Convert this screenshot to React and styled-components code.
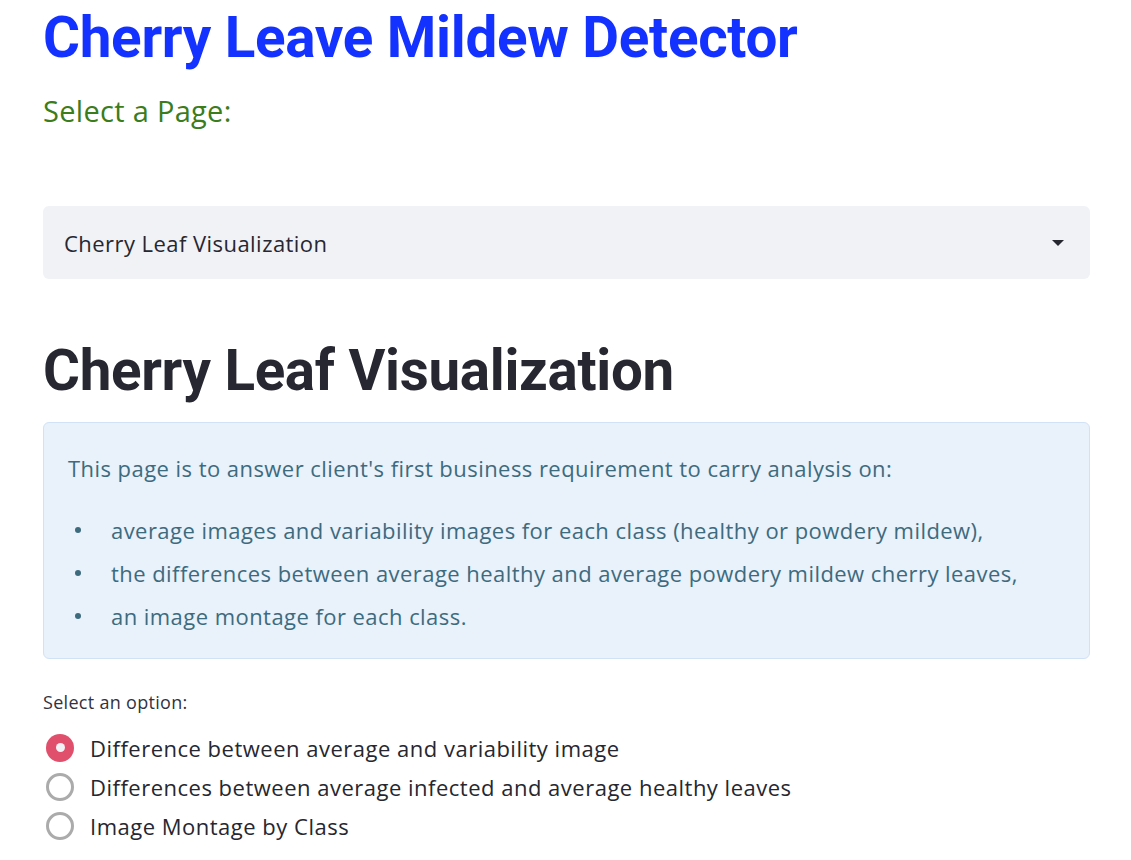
import React from "react";
import styled, { createGlobalStyle } from "styled-components";

const GlobalStyle = createGlobalStyle`
  body {
    margin: 0;
    background: #ffffff;
    font-family: "Open Sans", "Noto Sans", sans-serif;
    color: #262730;
  }
`;

const Page = styled.main`
  display: flex;
  flex-direction: column;
  padding: 0 41px 0 43px;
`;

const Title = styled.h1`
  margin: 6px 0 0;
  font-family: Roboto, sans-serif;
  font-size: 56.6px;
  line-height: 64px;
  font-weight: 700;
  color: #1432ff;
  letter-spacing: -0.3px;
`;

const PageLabel = styled.h3`
  margin: 21px 0 0;
  font-size: 29px;
  line-height: 40px;
  font-weight: 400;
  letter-spacing: 0.3px;
  color: #3b7c1b;
`;

const Select = styled.div`
  display: flex;
  align-items: center;
  justify-content: space-between;
  margin-top: 75px;
  height: 73px;
  padding: 0 26px 0 21px;
  background: #f0f2f6;
  border-radius: 6px;
  font-size: 22px;
  letter-spacing: 0.45px;
  color: #262730;
`;

const Caret = styled.span`
  width: 0;
  height: 0;
  border-left: 6px solid transparent;
  border-right: 6px solid transparent;
  border-top: 6px solid #262730;
`;

const Heading = styled.h1`
  margin: 60px 0 0;
  font-family: Roboto, sans-serif;
  font-size: 56.5px;
  line-height: 64px;
  font-weight: 700;
  color: #262730;
  letter-spacing: -0.3px;
`;

const InfoBox = styled.div`
  margin-top: 19px;
  padding: 28px 24px 25px;
  background: #e9f1fb;
  border: 1px solid #d2e2f6;
  border-radius: 6px;
  color: #3d6b7e;
  font-size: 22px;
  letter-spacing: 0.45px;
  line-height: 34px;
`;

const Para = styled.p`
  margin: 0 0 28px;
`;

const List = styled.ul`
  margin: 0;
  padding: 0;
  list-style: none;
`;

const Item = styled.li`
  position: relative;
  padding-left: 43px;
  margin-bottom: 9px;

  &:last-child {
    margin-bottom: 0;
  }

  &::before {
    content: "";
    position: absolute;
    left: 7px;
    top: 14px;
    width: 6px;
    height: 6px;
    border-radius: 50%;
    background: #3d6b7e;
  }
`;

const OptionLabel = styled.div`
  margin-top: 30px;
  font-size: 18px;
  letter-spacing: 0.3px;
  line-height: 26px;
  color: #31333f;
`;

const RadioGroup = styled.div`
  display: flex;
  flex-direction: column;
  margin-top: 13px;
`;

const RadioRow = styled.label`
  display: flex;
  align-items: center;
  gap: 16px;
  height: 39px;
  padding-left: 3px;
  font-size: 22px;
  letter-spacing: 0.5px;
  color: #262730;
`;

const Ring = styled.span`
  box-sizing: border-box;
  width: 28px;
  height: 28px;
  border-radius: 50%;
  flex-shrink: 0;
  display: flex;
  align-items: center;
  justify-content: center;
  border: ${p => (p.checked ? "none" : "3px solid #ababab")};
  background: ${p => (p.checked ? "#e0506c" : "#ffffff")};

  &::after {
    content: "";
    display: ${p => (p.checked ? "block" : "none")};
    width: 9px;
    height: 9px;
    border-radius: 50%;
    background: #f0f2f6;
  }
`;

const bullets = [
  "average images and variability images for each class (healthy or powdery mildew),",
  "the differences between average healthy and average powdery mildew cherry leaves,",
  "an image montage for each class."
];

const options = [
  "Difference between average and variability image",
  "Differences between average infected and average healthy leaves",
  "Image Montage by Class"
];

export default function App() {
  return (
    <>
      <GlobalStyle />
      <Page>
        <Title>Cherry Leave Mildew Detector</Title>
        <PageLabel>Select a Page:</PageLabel>
        <Select>
          <span>Cherry Leaf Visualization</span>
          <Caret />
        </Select>
        <Heading>Cherry Leaf Visualization</Heading>
        <InfoBox>
          <Para>
            This page is to answer client's first business requirement to carry analysis on:
          </Para>
          <List>
            {bullets.map(b => (
              <Item key={b}>{b}</Item>
            ))}
          </List>
        </InfoBox>
        <OptionLabel>Select an option:</OptionLabel>
        <RadioGroup>
          {options.map((o, i) => (
            <RadioRow key={o}>
              <Ring checked={i === 0} />
              {o}
            </RadioRow>
          ))}
        </RadioGroup>
      </Page>
    </>
  );
}
